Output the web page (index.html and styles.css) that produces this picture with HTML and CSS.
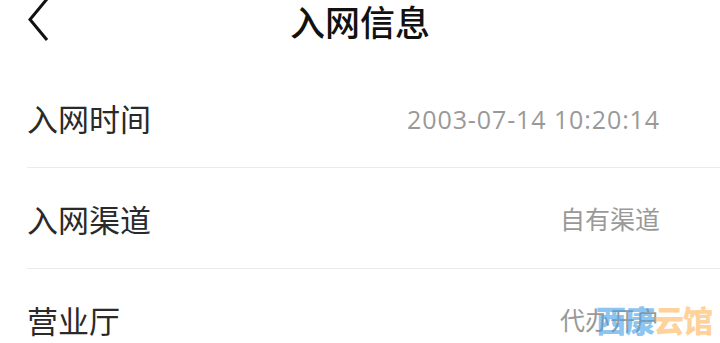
FILE: index.html
```html
<!DOCTYPE html>
<html lang="zh-CN">
<head>
    <meta charset="UTF-8">
    <meta name="viewport" content="width=device-width, initial-scale=1.0">
    <title>入网信息</title>
    <link rel="stylesheet" href="styles.css">
</head>
<body>
    <div class="header">
        <span class="back">
            <svg width="24" height="42" viewBox="0 0 24 42">
                <polyline points="20,-1 3,19.5 20,40" fill="none" stroke="#111" stroke-width="3"/>
            </svg>
        </span>
        <h1 class="title">入网信息</h1>
    </div>

    <div class="list">
        <div class="row">
            <span class="label">入网时间</span>
            <span class="value num">2003-07-14 10:20:14</span>
        </div>
        <div class="row">
            <span class="label">入网渠道</span>
            <span class="value">自有渠道</span>
        </div>
        <div class="row">
            <span class="label">营业厅</span>
            <span class="value">代办开户</span>
        </div>
    </div>

    <!-- watermark in the corner -->
    <div class="watermark"><span class="wm-blue">西康</span><span class="wm-orange">云馆</span></div>
</body>
</html>
```

FILE: styles.css
```css
html, body {
    height: 343px;
    overflow: hidden;
}
body {
    margin: 0;
    background-color: #fff;
    font-family: "Noto Sans CJK SC", "Noto Sans", sans-serif;
    color: #222;
}
.header {
    position: relative;
    height: 42px;
    display: flex;
    align-items: center;
    justify-content: center;
}
.back {
    position: absolute;
    left: 27px;
    top: 0;
    height: 42px;
}
.title {
    margin: 0;
    font-size: 35px;
    font-weight: 500;
    line-height: 44px;
    color: #111;
}
.list {
    margin-top: 25px;
}
.row {
    display: flex;
    align-items: center;
    justify-content: space-between;
    height: 100px;
    margin-left: 27px;
    padding-right: 60px;
    border-bottom: 1px solid #ebebeb;
}
.label {
    font-size: 31px;
    color: #2a2a2a;
}
.value {
    font-size: 25px;
    color: #999;
}
.num {
    font-family: "Open Sans", "Noto Sans", sans-serif;
    font-size: 25px;
    letter-spacing: 0.9px;
    padding-top: 3px;
}
.watermark {
    position: absolute;
    right: 8px;
    bottom: 2px;
    font-size: 30px;
    font-weight: 900;
    letter-spacing: -1px;
}
.wm-blue {
    color: rgba(74, 163, 232, 0.65);
}
.wm-orange {
    color: rgba(255, 190, 110, 0.7);
}
```
